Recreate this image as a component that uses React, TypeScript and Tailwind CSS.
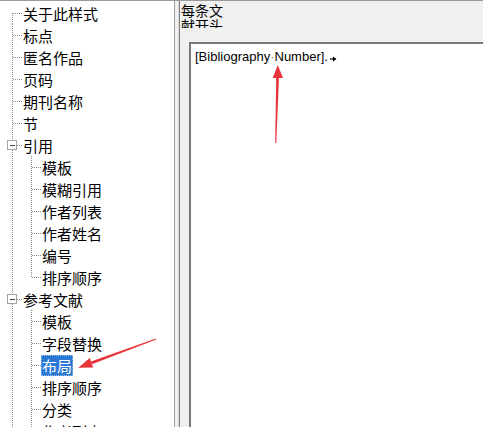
type Guide = 'pass' | 'tee' | 'ell' | 'first' | 'box';

interface TreeRow {
  label: string;
  guides: Guide[];
  selected?: boolean;
}

const cjk = { fontFamily: '"Noto Sans CJK SC", "Noto Sans", sans-serif' };

const topLevel = ['关于此样式', '标点', '匿名作品', '页码', '期刊名称', '节'];
const citation = ['模板', '模糊引用', '作者列表', '作者姓名', '编号', '排序顺序'];
const bibliography = ['模板', '字段替换', '布局', '排序顺序', '分类', '作者列表', '作者姓名', '编号'];

function buildRows(): TreeRow[] {
  const rows: TreeRow[] = topLevel.map((label, i) => ({
    label,
    guides: [i === 0 ? 'first' : 'tee'],
  }));
  rows.push({ label: '引用', guides: ['box'] });
  citation.forEach((label, i) =>
    rows.push({ label, guides: ['pass', i === citation.length - 1 ? 'ell' : 'tee'] }),
  );
  rows.push({ label: '参考文献', guides: ['box'] });
  bibliography.forEach((label) =>
    rows.push({ label, guides: ['pass', 'tee'], selected: label === '布局' }),
  );
  return rows;
}

// dotted connector lines of the tree, one 19x22 cell per indent level
function GuideCell({ kind }: { kind: Guide }) {
  const dots = { stroke: '#8f8f8f', strokeWidth: 1, strokeDasharray: '1 1', shapeRendering: 'crispEdges' as const };
  const top = kind === 'first' ? 11 : 0;
  const bottom = kind === 'ell' ? 11 : 22;
  return (
    <svg className="shrink-0" width="19" height="22" viewBox="0 0 19 22">
      <line x1="9.5" y1={top} x2="9.5" y2={bottom} {...dots} />
      {kind !== 'pass' && kind !== 'box' && <line x1="10" y1="11.5" x2="19" y2="11.5" {...dots} />}
      {kind === 'box' && (
        <>
          <line x1="14" y1="11.5" x2="19" y2="11.5" {...dots} />
          <rect x="4.5" y="6.5" width="9" height="9" fill="#fff" stroke="#a3a3a3" shapeRendering="crispEdges" />
          <line x1="7" y1="11" x2="12" y2="11" stroke="#3c3c3c" shapeRendering="crispEdges" />
        </>
      )}
    </svg>
  );
}

function Row({ row }: { row: TreeRow }) {
  return (
    <div className="flex h-[22px] items-center">
      {row.guides.map((g, i) => (
        <GuideCell key={i} kind={g} />
      ))}
      <span
        className={
          row.selected
            ? 'h-[21px] whitespace-nowrap bg-[#2a77d4] px-px text-[15px] leading-[21px] text-white outline outline-1 outline-dotted outline-[#9cc3f0] -outline-offset-1'
            : 'h-[21px] whitespace-nowrap px-px text-[15px] leading-[21px] text-black'
        }
        style={cjk}
      >
        {row.label}
      </span>
    </div>
  );
}

function RedArrows() {
  return (
    <svg className="pointer-events-none absolute left-0 top-0" width="483" height="427" viewBox="0 0 483 427">
      <g fill="#e8353b">
        <polygon points="277.8,64 272.6,77 283,77" />
        <polygon points="276.2,76 279,76 276.3,142 275.2,142" />
        <polygon points="78.3,366.7 89.7,357.1 93.1,366.5" />
        <polygon points="90.9,360.4 91.9,363.2 156.2,338.5 155.8,337.5" />
      </g>
    </svg>
  );
}

export default function App() {
  const rows = buildRows();
  return (
    <div className="relative flex h-[427px] w-[483px] overflow-hidden border-t border-[#9a9a9a] bg-[#f0f0f0]">
      {/* style tree */}
      <div className="w-[175px] shrink-0 overflow-hidden border-r border-[#a0a0a0] bg-white pl-[3px] pt-px">
        {rows.map((r, i) => (
          <Row key={i} row={r} />
        ))}
      </div>

      <div className="w-[4px] shrink-0 border-r border-[#d9d9d9]" />

      {/* layout editor */}
      <div className="flex min-w-0 flex-1 flex-col border-l border-[#7f7f7f] pl-px">
        <div
          className="mt-[2px] h-[25px] w-[44px] overflow-hidden text-[14px] leading-[15px] text-black"
          style={cjk}
        >
          每条文献开头
        </div>
        <div className="ml-[8px] mt-[14px] flex-1 border-l-2 border-t-2 border-[#787878] bg-white pl-[4px] pt-[5px]">
          <div
            className="flex items-center whitespace-nowrap text-[13px] leading-[16px] text-black"
            style={{ fontFamily: '"Liberation Sans", Arial, sans-serif' }}
          >
            <span>[Bibliography</span>
            <span className="text-[#8a8a8a]">·</span>
            <span>Number].</span>
            <svg className="ml-[2px] mt-[3px]" width="7" height="6" viewBox="0 0 7 6">
              <path d="M0 3h4" stroke="#000" strokeWidth="1.2" />
              <path d="M3 0.5L6.5 3L3 5.5z" fill="#000" />
            </svg>
          </div>
        </div>
      </div>

      <RedArrows />
    </div>
  );
}
